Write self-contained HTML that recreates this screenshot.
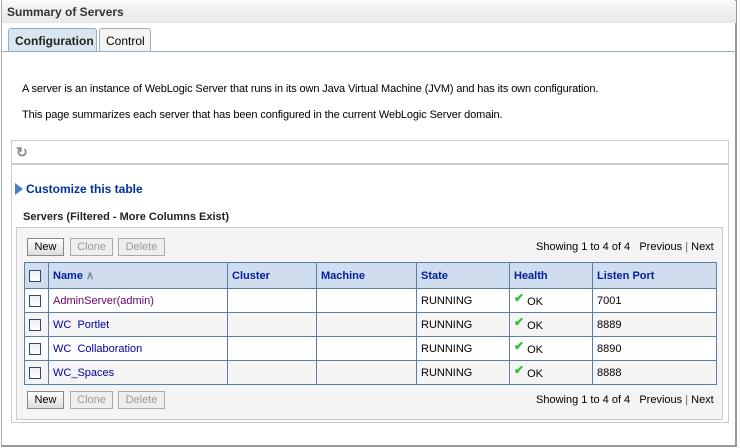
<!DOCTYPE html>
<html><head><style>
*{margin:0;padding:0;box-sizing:border-box}
body{width:740px;height:448px;background:#fff;font-family:"Liberation Sans",sans-serif;font-size:11px;color:#000;position:relative;overflow:hidden}
.abs{position:absolute}
.outer{left:1px;top:0;width:736px;height:447px;border-left:1px solid #aaa;border-right:2px solid #999;border-bottom:2px solid #999}
.title{left:2px;top:1px;width:734px;height:22px;background:linear-gradient(#f8f8f8,#e8e8e8);font-weight:bold;font-size:12px;color:#333;padding:4px 0 0 5px}
.tabline{left:2px;top:51px;width:734px;height:1px;background:#8fb0cc}
.tab{top:28px;height:24px;border:1px solid #aaa;border-bottom:none;border-radius:3px 3px 0 0;padding:5px 0 0 6px;font-size:12px}
.t1{left:8px;width:89px;background:#d9e6f0;font-weight:bold;color:#222;border-color:#8fb0cc}
.t2{left:99px;width:52px;background:#f4f4f4}
.panel{left:11px;top:140px;width:718px;height:283px;border:1px solid #ccc}
.tb{left:12px;top:163px;width:716px;height:2px;background:#ccc}
.tp{left:16px;top:227px;width:707px;height:193px;background:#f4f4f4;border:1px solid #ccc}
.btn{height:18px;border:1px solid #aaa;background:#eee;text-align:center;padding-top:2px;font-size:11px;color:#999}
.btn.n{color:#000;background:linear-gradient(#fff,#ddd);border-color:#888}
table{position:absolute;left:24px;top:262px;border-collapse:collapse;background:#fff}
td,th{border:1px solid #5a7ea4;height:24px;padding:0 4px;text-align:left;font-size:11px}
th{background:#d0ddee;color:#00209f;font-weight:bold;height:26px}
tr.g td{background:#f4f4f4}
.cb{display:inline-block;width:12px;height:12px;border:1px solid #2c4a6e;background:linear-gradient(#eee,#fff);vertical-align:middle}
a{color:#0000a0;text-decoration:none}
.ck{color:#3b3;font-weight:bold;font-size:12px;position:relative;top:-3px}
.sh{font-size:11px}
.d{letter-spacing:-0.12px}
</style></head><body>
<div class="abs outer"></div>
<div class="abs title">Summary of Servers</div>
<div class="abs tab t1">Configuration</div>
<div class="abs tab t2">Control</div>
<div class="abs tabline"></div>
<div class="abs d" style="left:22px;top:83px">A server is an instance of WebLogic Server that runs in its own Java Virtual Machine (JVM) and has its own configuration.</div>
<div class="abs d" style="left:22px;top:109px">This page summarizes each server that has been configured in the current WebLogic Server domain.</div>
<div class="abs panel"></div>
<div class="abs tb"></div>
<div class="abs" style="left:16px;top:144px;color:#888;font-size:14px;font-weight:bold">&#x21BB;</div>
<div class="abs" style="left:15px;top:183px;width:0;height:0;border-top:6px solid transparent;border-bottom:6px solid transparent;border-left:8px solid #4a7ec0"></div>
<div class="abs" style="left:26px;top:182px;font-weight:bold;font-size:12px;color:#00309c">Customize this table</div>
<div class="abs" style="left:23px;top:211px;font-weight:bold;font-size:11px;color:#222">Servers (Filtered - More Columns Exist)</div>
<div class="abs tp"></div>
<div class="abs btn n" style="left:27px;top:238px;width:37px">New</div>
<div class="abs btn" style="left:70px;top:238px;width:43px">Clone</div>
<div class="abs btn" style="left:118px;top:238px;width:47px">Delete</div>
<div class="abs sh" style="left:536px;top:241px">Showing 1 to 4 of 4 &nbsp; Previous <span style="color:#666">|</span> Next</div>
<table>
<tr><th style="width:24px"><span class="cb"></span></th><th style="width:179px">Name <span style="color:#789">&#x2227;</span></th><th style="width:89px">Cluster</th><th style="width:100px">Machine</th><th style="width:93px">State</th><th style="width:83px">Health</th><th style="width:124px">Listen Port</th></tr>
<tr><td><span class="cb"></span></td><td><a style="color:#6a006a">AdminServer(admin)</a></td><td></td><td></td><td>RUNNING</td><td><span class="ck">&#x2714;</span> OK</td><td>7001</td></tr>
<tr class="g"><td><span class="cb"></span></td><td><a>WC&nbsp; Portlet</a></td><td></td><td></td><td>RUNNING</td><td><span class="ck">&#x2714;</span> OK</td><td>8889</td></tr>
<tr><td><span class="cb"></span></td><td><a>WC&nbsp; Collaboration</a></td><td></td><td></td><td>RUNNING</td><td><span class="ck">&#x2714;</span> OK</td><td>8890</td></tr>
<tr class="g"><td><span class="cb"></span></td><td><a>WC_Spaces</a></td><td></td><td></td><td>RUNNING</td><td><span class="ck">&#x2714;</span> OK</td><td>8888</td></tr>
</table>
<div class="abs btn n" style="left:27px;top:391px;width:37px">New</div>
<div class="abs btn" style="left:70px;top:391px;width:43px">Clone</div>
<div class="abs btn" style="left:118px;top:391px;width:47px">Delete</div>
<div class="abs sh" style="left:536px;top:394px">Showing 1 to 4 of 4 &nbsp; Previous <span style="color:#666">|</span> Next</div>
</body></html>
